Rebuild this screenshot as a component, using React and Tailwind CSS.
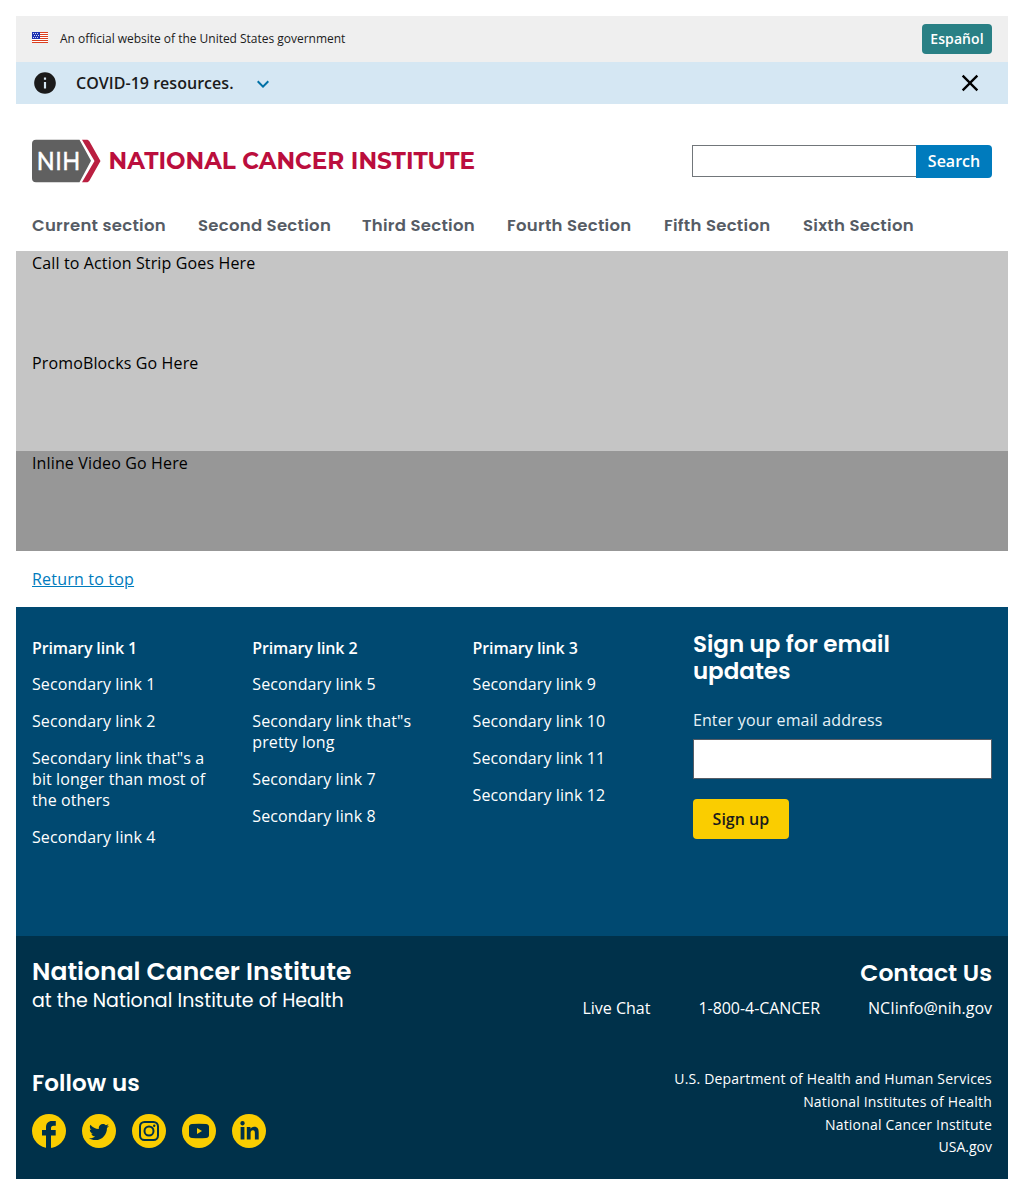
import { MdInfo, MdExpandMore, MdClose } from "react-icons/md";
import { FaTwitter, FaLinkedinIn } from "react-icons/fa";

const nav = [
  ["Current section", "w-[134px]"],
  ["Second Section", "w-[132px]"],
  ["Third Section", "w-[113px]"],
  ["Fourth Section", "w-[125px]"],
  ["Fifth Section", "w-[107px]"],
  ["Sixth Section", "w-[110px]"],
];

const columns = [
  ["Primary link 1", ["Secondary link 1", "Secondary link 2", 'Secondary link that"s a bit longer than most of the others', "Secondary link 4"]],
  ["Primary link 2", ["Secondary link 5", 'Secondary link that"s pretty long', "Secondary link 7", "Secondary link 8"]],
  ["Primary link 3", ["Secondary link 9", "Secondary link 10", "Secondary link 11", "Secondary link 12"]],
];

function Flag() {
  return (
    <svg width="16" height="11" viewBox="0 0 16 11" shapeRendering="crispEdges">
      <rect width="16" height="11" fill="#fff" />
      {[0, 2, 4, 6, 8, 10].map((y) => (
        <rect key={y} y={y} width="16" height="1" fill="#db3e1f" />
      ))}
      <rect width="8" height="7" fill="#1e33b1" />
      {[[1, 1], [3, 1], [5, 1], [2, 3], [4, 3], [6, 3], [1, 5], [3, 5], [5, 5]].map(([x, y]) => (
        <rect key={`${x}-${y}`} x={x} y={y} width="1" height="1" fill="#d5daf5" />
      ))}
    </svg>
  );
}

function Logo() {
  return (
    <svg width="450" height="44" viewBox="0 0 450 44" aria-label="National Cancer Institute">
      <path d="M4 .7h43.500L59 21.700 47.500 43.200H4a4 4 0 0 1-4-4V4.700a4 4 0 0 1 4-4z" fill="#606060" />
      <path d="M50 .7h4.500c1.300 0 2.300.6 3 1.800L68.500 22 57.500 41.400c-.7 1.200-1.700 1.800-3 1.800H50L62.500 22z" fill="#ba1f40" />
      <text x="4.600" y="31.200" textLength="44" lengthAdjust="spacingAndGlyphs" fill="#fff" stroke="#fff" strokeWidth=".4" className="font-['Montserrat','Lato',sans-serif] text-[26.500px] font-medium">NIH</text>
      <text x="76.600" y="29.700" textLength="366.500" lengthAdjust="spacingAndGlyphs" fill="#bb0e3d" className="font-['Montserrat','Inter',sans-serif] text-[24px] font-bold">NATIONAL CANCER INSTITUTE</text>
    </svg>
  );
}

function Disc({ children }) {
  return (
    <a className="flex size-[34px] items-center justify-center rounded-full bg-[#facd00] text-[#00314a]">{children}</a>
  );
}

export default function App() {
  return (
    <div className="h-[1195px] bg-white p-4 font-['Open_Sans',sans-serif] text-base text-[#1b1b1b]">
      <div className="flex h-[46px] items-center bg-[#efefef] px-4">
        <div className="mr-3 flex h-[14px] items-start"><Flag /></div>
        <span className="text-xs tracking-[-0.02px]">An official website of the United States government</span>
        <a className="ml-auto flex h-[30px] w-[70px] items-center justify-center rounded bg-[#298085] text-sm font-semibold tracking-[0.1px] text-white">Español</a>
      </div>

      <div className="flex h-[42px] items-center bg-[#d5e7f3] pr-6 pl-4">
        <MdInfo className="size-[26px]" />
        <span className="ml-[18px] w-[157px] font-semibold tracking-[0.03px] whitespace-nowrap">COVID-19 resources.</span>
        <MdExpandMore className="mt-0.5 ml-[18px] size-6 text-[#0071a6]" />
        <MdClose className="ml-auto size-7 text-black" />
      </div>

      <header className="h-[147px] px-4 pt-[35px]">
        <div className="flex items-start justify-between">
          <Logo />
          <form className="mt-1.5 flex w-[300px] items-start">
            <input className="h-8 w-56 border border-r-0 border-[#71767a] bg-white" />
            <button type="button" className="h-[33px] flex-1 rounded-r bg-[#007bbd] pb-0.5 font-semibold text-white">Search</button>
          </form>
        </div>
        <nav className="mt-[30px] flex gap-8">
          {nav.map(([label, width]) => (
            <a key={label} className={`${width} font-['Poppins','Inter',sans-serif] text-[16.500px] leading-[25px] font-semibold tracking-[0.27px] whitespace-nowrap text-[#565c65]`}>{label}</a>
          ))}
        </nav>
      </header>

      <main className="tracking-[0.14px] text-black">
        <div className="h-[100px] bg-[#c5c5c5] px-4">Call to Action Strip Goes Here</div>
        <div className="h-[100px] bg-[#c5c5c5] px-4">PromoBlocks Go Here</div>
        <div className="h-[100px] bg-[#979797] px-4">Inline Video Go Here</div>
      </main>

      <div className="flex h-14 items-center px-4">
        <a className="tracking-[0.2px] text-[#007bbd] underline">Return to top</a>
      </div>

      <footer className="text-white">
        <div className="flex h-[329px] gap-8 bg-[#004971] px-4">
          {columns.map(([title, links]) => (
            <section key={title} className="w-[188.300px] pt-[31px] leading-[21px]">
              <h3 className="font-semibold tracking-[-0.13px]">{title}</h3>
              <ul className="mt-[15px] flex flex-col gap-4 tracking-[0.1px]">
                {links.map((link) => <li key={link}>{link}</li>)}
              </ul>
            </section>
          ))}
          <section className="flex-1 pt-6">
            <h3 className="font-['Poppins','Inter',sans-serif] text-[23px] leading-[27px] font-semibold">Sign up for email<br />updates</h3>
            <label className="mt-[25px] block leading-[21px] tracking-[0.13px] text-[#e6f1f7]">Enter your email address</label>
            <input className="mt-2 block h-10 w-full border border-[#565c65] bg-white" />
            <button type="button" className="mt-5 h-10 w-24 rounded bg-[#facd00] font-semibold text-[#1b1b1b]">Sign up</button>
          </section>
        </div>

        <div className="flex h-[243px] flex-col bg-[#00314a] px-4">
          <div className="flex h-[122px] justify-between pt-[19px]">
            <div className="font-['Poppins','Inter',sans-serif]">
              <p className="mt-px text-[25px] leading-8 font-semibold tracking-[0.03px]">National Cancer Institute</p>
              <p className="mt-px text-[19px] leading-6">at the National Institute of Health</p>
            </div>
            <div className="text-right">
              <h3 className="mt-0.5 font-['Poppins','Inter',sans-serif] text-[23.500px] leading-8 font-semibold">Contact Us</h3>
              <div className="mt-[7px] flex gap-12 leading-6">
                <a>Live Chat</a><a className="tracking-[-0.05px]">1-800-4-CANCER</a><a>NCIinfo@nih.gov</a>
              </div>
            </div>
          </div>
          <div className="flex justify-between">
            <div className="pt-[9px]">
              <h3 className="font-['Poppins','Inter',sans-serif] text-[23px] leading-8 font-semibold tracking-[0.1px]">Follow us</h3>
              <div className="mt-[15px] flex gap-4">
                <Disc>
                  <svg viewBox="0 0 34 34" className="size-[34px]" fill="currentColor"><path d="M14 34V21.500h-4V16h4v-2.500C14 9.300 16.300 7 20 7h3.800v4.800h-2.300c-1.800 0-2.500.9-2.500 2.400V16h4.700v5.500H19V34z" /></svg>
                </Disc>
                <Disc><FaTwitter className="mt-0.5 size-5" /></Disc>
                <Disc>
                  <svg viewBox="0 0 34 34" className="size-[34px]" fill="none" stroke="currentColor" strokeWidth="2"><rect x="8" y="8" width="18" height="18" rx="4.500" /><circle cx="17" cy="17" r="4.500" /><circle cx="22.200" cy="11.700" r="1.200" fill="currentColor" stroke="none" /></svg>
                </Disc>
                <Disc>
                  <svg viewBox="0 0 34 34" className="size-[34px]"><path d="M10 10q7-.6 14 0 3 .3 3 3v8q0 2.700-3 3-7 .6-14 0-3-.3-3-3v-8q0-2.700 3-3z" fill="currentColor" /><path d="m15 14 5 3-5 3z" fill="#facd00" /></svg>
                </Disc>
                <Disc><FaLinkedinIn className="size-[21px]" /></Disc>
              </div>
            </div>
            <div className="flex flex-col pt-2.5 text-right text-sm leading-[22.800px] tracking-[0.2px]">
              <a>U.S. Department of Health and Human Services</a>
              <a>National Institutes of Health</a>
              <a>National Cancer Institute</a>
              <a className="tracking-normal">USA.gov</a>
            </div>
          </div>
        </div>
      </footer>
    </div>
  );
}
